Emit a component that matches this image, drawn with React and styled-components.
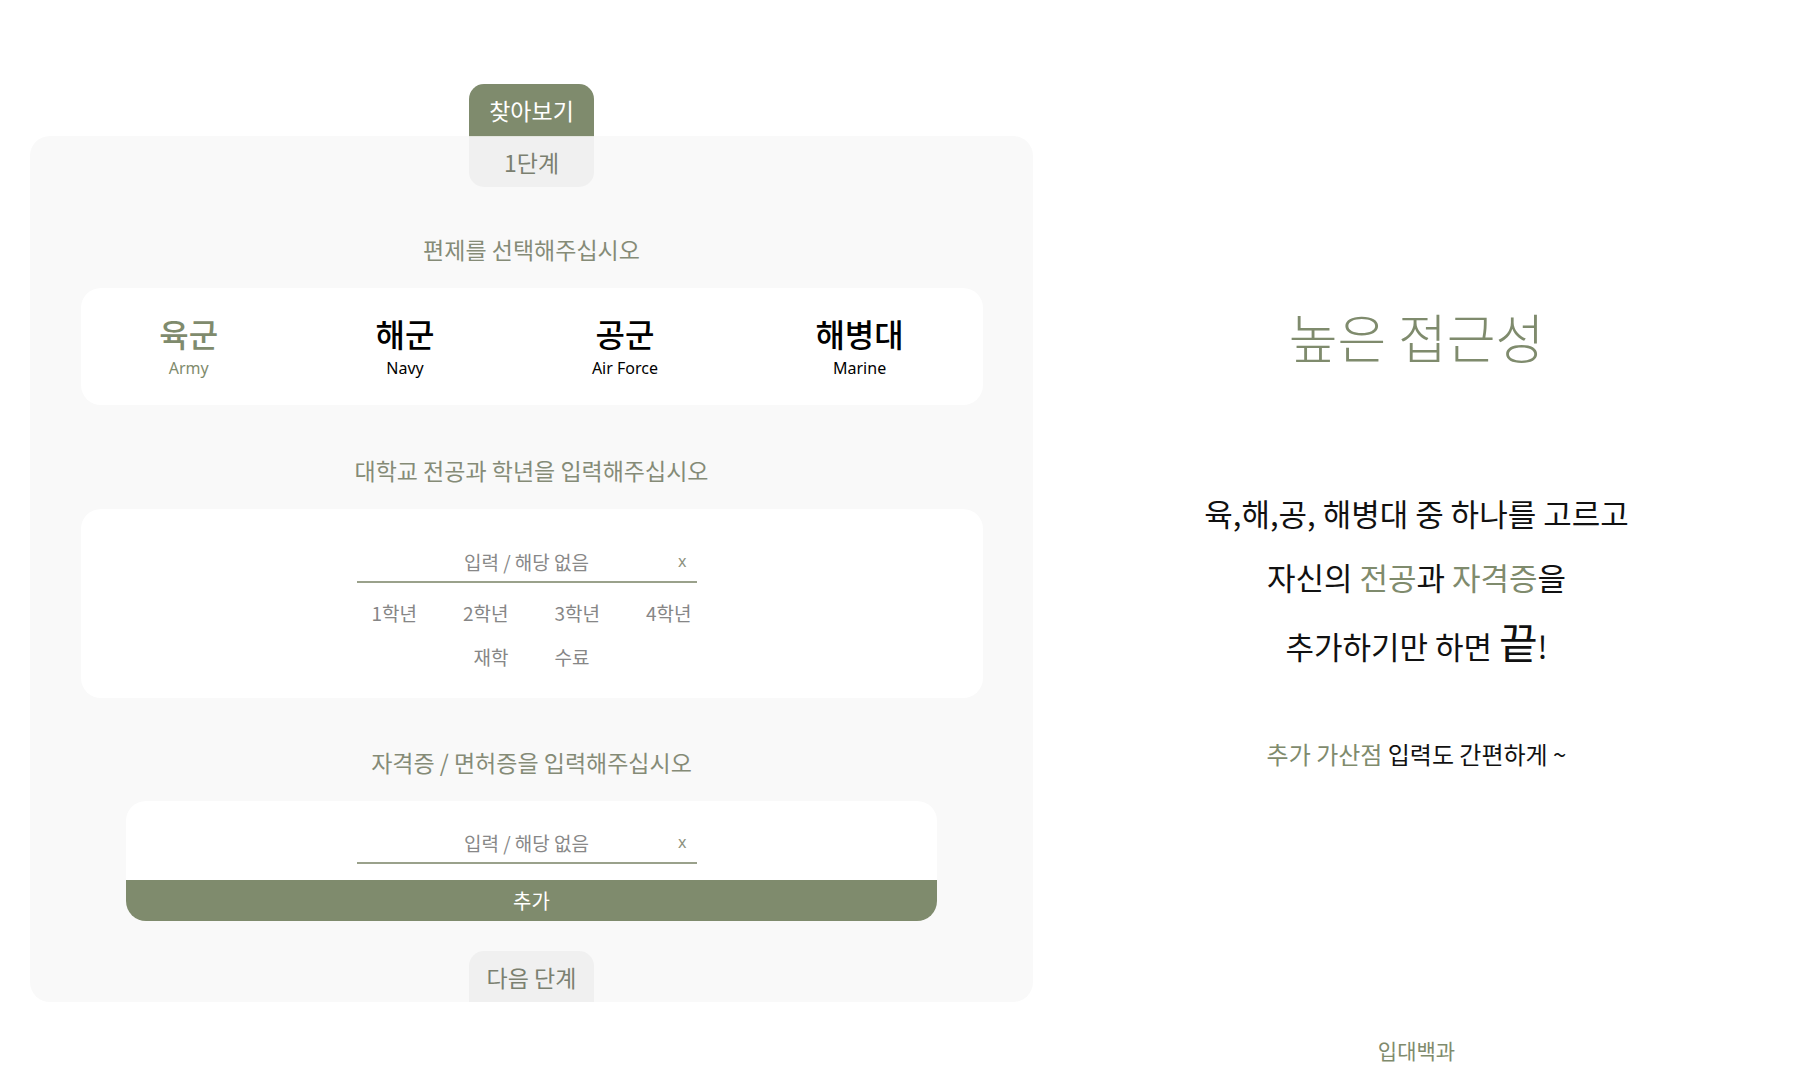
import React, { useState } from "react";
import styled, { createGlobalStyle } from "styled-components";

const GREEN = "#7f8b6d";
const FONT = `"Noto Sans CJK KR", "Noto Sans", sans-serif`;

const Global = createGlobalStyle`
  html, body { margin: 0; padding: 0; background: #ffffff; }
  body { font-family: ${FONT}; }
  * { box-sizing: border-box; }
`;

const Page = styled.div`
  display: grid;
  grid-template-columns: 1033px 1fr;
  width: 1800px;
  height: 1080px;
  overflow: hidden;
`;

const Left = styled.section`
  display: flex;
  flex-direction: column;
  align-items: center;
  padding: 84px 0 0 30px;
`;

const TabHead = styled.div`
  width: 125px;
  height: 52px;
  background: ${GREEN};
  color: #fff;
  border-radius: 15px 15px 0 0;
  font-size: 23px;
  display: flex;
  align-items: center;
  justify-content: center;
`;

const Panel = styled.div`
  width: 1003px;
  height: 866px;
  background: #f9f9f9;
  border-radius: 20px;
  display: flex;
  flex-direction: column;
  align-items: center;
`;

const Step = styled.div`
  width: 125px;
  height: 51px;
  background: #f0f0f0;
  color: #7b8070;
  border-top: ${(p) => (p.$bottom ? "none" : "1px solid #e4e6df")};
  border-radius: ${(p) => (p.$bottom ? "15px 15px 0 0" : "0 0 15px 15px")};
  font-size: 23px;
  display: flex;
  align-items: center;
  justify-content: center;
  margin-top: ${(p) => (p.$bottom ? "auto" : "0")};
`;

const SectionTitle = styled.h2`
  margin: ${(p) => p.$mt}px 0 0;
  font-size: 23px;
  font-weight: 400;
  line-height: 30px;
  color: #858b77;
`;

const Card = styled.div`
  width: ${(p) => p.$w}px;
  margin-top: 24px;
  background: #ffffff;
  border-radius: 20px;
  overflow: hidden;
  display: flex;
  flex-direction: column;
  align-items: center;
  padding: ${(p) => p.$pad};
`;

const BranchRow = styled.div`
  width: 100%;
  display: flex;
  justify-content: space-around;
  align-items: center;
`;

const Branch = styled.button`
  border: none;
  background: none;
  padding: 0;
  display: flex;
  flex-direction: column;
  align-items: center;
  cursor: pointer;
  font-family: ${FONT};
  color: ${(p) => (p.$active ? GREEN : "#000")};
`;

const BranchKo = styled.span`
  font-size: 32px;
  font-weight: 500;
  line-height: 32px;
`;

const BranchEn = styled.span`
  font-family: "Noto Sans", ${FONT};
  font-size: 16px;
  line-height: 20px;
  margin-top: 9px;
`;

const Field = styled.div`
  position: relative;
  width: 340px;
  height: 42px;
  margin-right: 10px;
  border-bottom: 2px solid #9aa18b;
  flex-shrink: 0;
`;

const Input = styled.input`
  width: 100%;
  height: 100%;
  border: none;
  outline: none;
  background: transparent;
  text-align: center;
  font-family: ${FONT};
  font-size: 19px;
  color: #333;
  &::placeholder { color: #888888; }
`;

const Clear = styled.button`
  position: absolute;
  right: 10px;
  top: 50%;
  transform: translateY(-50%);
  border: none;
  background: none;
  padding: 0;
  color: #8d9280;
  font-family: "Noto Sans", sans-serif;
  font-size: 16px;
  cursor: pointer;
`;

const OptionRow = styled.div`
  display: flex;
  gap: 46px;
  margin-top: ${(p) => p.$mt}px;
`;

const Option = styled.button`
  border: none;
  background: none;
  padding: 0;
  font-family: ${FONT};
  font-size: 19px;
  line-height: 26px;
  color: #868686;
  cursor: pointer;
`;

const AddButton = styled.button`
  width: 100%;
  height: 41px;
  margin-top: 16px;
  border: none;
  background: ${GREEN};
  color: #fff;
  font-family: ${FONT};
  font-size: 20px;
  cursor: pointer;
`;

const Right = styled.section`
  display: flex;
  flex-direction: column;
  align-items: center;
  padding-top: 304px;
`;

const Headline = styled.h1`
  margin: 0;
  font-size: 53px;
  font-weight: 300;
  line-height: 64px;
  color: ${GREEN};
`;

const Para = styled.p`
  margin: 113px 0 0;
  font-size: 31px;
  font-weight: 400;
  line-height: 64px;
  color: #111;
  text-align: center;
`;

const Hl = styled.span`
  color: ${GREEN};
`;

const Big = styled.span`
  font-size: 42px;
`;

const Sub = styled.p`
  margin: 61px 0 0;
  font-size: 24px;
  line-height: 30px;
  color: #111;
`;

const Footer = styled.footer`
  margin-top: auto;
  padding-bottom: 15px;
  font-size: 21px;
  line-height: 30px;
  color: ${GREEN};
`;

const branches = [
  { ko: "육군", en: "Army" },
  { ko: "해군", en: "Navy" },
  { ko: "공군", en: "Air Force" },
  { ko: "해병대", en: "Marine" },
];

function ClearField() {
  const [v, setV] = useState("");
  return (
    <Field>
      <Input value={v} onChange={(e) => setV(e.target.value)} placeholder="입력 / 해당 없음" />
      <Clear onClick={() => setV("")}>x</Clear>
    </Field>
  );
}

export default function App() {
  const [branch, setBranch] = useState(0);
  return (
    <>
      <Global />
      <Page>
        <Left>
          <TabHead>찾아보기</TabHead>
          <Panel>
            <Step>1단계</Step>
            <SectionTitle $mt={47}>편제를 선택해주십시오</SectionTitle>
            <Card $w={902} $pad="29px 0 27px">
              <BranchRow>
                {branches.map((b, i) => (
                  <Branch key={b.ko} $active={branch === i} onClick={() => setBranch(i)}>
                    <BranchKo>{b.ko}</BranchKo>
                    <BranchEn>{b.en}</BranchEn>
                  </Branch>
                ))}
              </BranchRow>
            </Card>
            <SectionTitle $mt={50}>대학교 전공과 학년을 입력해주십시오</SectionTitle>
            <Card $w={902} $pad="32px 0 28px">
              <ClearField />
              <OptionRow $mt={17}>
                <Option>1학년</Option>
                <Option>2학년</Option>
                <Option>3학년</Option>
                <Option>4학년</Option>
              </OptionRow>
              <OptionRow $mt={18}>
                <Option>재학</Option>
                <Option>수료</Option>
              </OptionRow>
            </Card>
            <SectionTitle $mt={49}>자격증 / 면허증을 입력해주십시오</SectionTitle>
            <Card $w={811} $pad="21px 0 0">
              <ClearField />
              <AddButton>추가</AddButton>
            </Card>
            <Step $bottom>다음 단계</Step>
          </Panel>
        </Left>
        <Right>
          <Headline>높은 접근성</Headline>
          <Para>
            육,해,공, 해병대 중 하나를 고르고
            <br />
            자신의 <Hl>전공</Hl>과 <Hl>자격증</Hl>을
            <br />
            추가하기만 하면 <Big>끝</Big>!
          </Para>
          <Sub>
            <Hl>추가 가산점</Hl> 입력도 간편하게 ~
          </Sub>
          <Footer>입대백과</Footer>
        </Right>
      </Page>
    </>
  );
}
